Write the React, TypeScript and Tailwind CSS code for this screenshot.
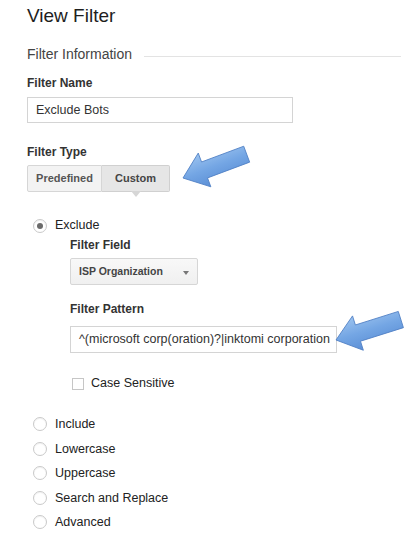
import React from 'react';

const radios = ['Include', 'Lowercase', 'Uppercase', 'Search and Replace', 'Advanced'];

function Radio({ checked = false }: { checked?: boolean }) {
  return (
    <span className="flex h-[14px] w-[14px] items-center justify-center rounded-full border border-[#c9c9c9] bg-white shadow-[inset_0_1px_1px_rgba(0,0,0,0.06)]">
      {checked && <span className="h-[6px] w-[6px] rounded-full bg-[#6b6b6b]" />}
    </span>
  );
}

function Arrow({ x, y, angle }: { x: number; y: number; angle: number }) {
  return (
    <g transform={`translate(${x},${y}) rotate(${angle})`}>
      <polygon
        points="0,0 23,-18 23,-8.5 68,-8.5 68,8.5 23,8.5 23,18"
        fill="url(#arrowFill)"
        stroke="#4f7fc4"
        strokeWidth="0.8"
        strokeLinejoin="round"
      />
    </g>
  );
}

export default function App() {
  return (
    <div className="relative h-[540px] w-[413px] overflow-hidden bg-white pl-[27px] text-[#333] [font-family:'Liberation_Sans',Arial,sans-serif]">
      {/* titulo */}
      <div className="pt-[4px] text-[19px] leading-[24px] text-[#1e1e1e]">View Filter</div>

      <div className="mt-[17px] flex items-start">
        <span className="text-[14px] leading-[18px] text-[#444]">Filter Information</span>
        <span className="ml-[12px] mt-[11px] h-px w-[257px] bg-[#e3e3e3]" />
      </div>

      <div className="mt-[12px] text-[12px] font-bold leading-[16px]">Filter Name</div>
      <div className="mt-[6px] h-[26px] w-[266px] border border-[#d4d4d4] pl-[8px] text-[12.5px] leading-[24px] text-[#333]">
        Exclude Bots
      </div>

      <div className="mt-[21px] text-[12px] font-bold leading-[16px]">Filter Type</div>
      <div className="mt-[5px] flex h-[27px] w-[143px] text-[11px] font-bold leading-[25px] text-[#555]">
        <div className="w-[75px] rounded-l-[2px] border border-[#d6d6d6] bg-[#f3f3f3] text-center">Predefined</div>
        <div className="relative flex-1 rounded-r-[2px] border border-l-0 border-[#d0d0d0] bg-[#e6e6e6] text-center text-[#444]">
          Custom
          <span className="absolute left-1/2 top-full -ml-[5px] h-0 w-0 border-x-[5px] border-t-[6px] border-x-transparent border-t-[#d6d6d6]" />
        </div>
      </div>

      <div className="mt-[25px] flex h-[16px] items-center pl-[6px] text-[12.5px] leading-[16px] text-[#222]">
        <span className="translate-y-[1px]">
          <Radio checked />
        </span>
        <span className="ml-[8px]">Exclude</span>
      </div>

      <div className="pl-[43px]">
        <div className="mt-[4px] text-[12px] font-bold leading-[16px]">Filter Field</div>
        <div className="mt-[5px] flex h-[27px] w-[128px] items-center rounded-[2px] border border-[#d6d6d6] bg-gradient-to-b from-[#f8f8f8] to-[#f0f0f0] pl-[8px] text-[10.5px] font-bold text-[#444]">
          <span>ISP Organization</span>
          <span className="ml-auto mr-[8px] h-0 w-0 translate-y-[1px] border-x-[3.5px] border-t-[4px] border-x-transparent border-t-[#777]" />
        </div>

        <div className="mt-[16px] text-[12px] font-bold leading-[16px]">Filter Pattern</div>
        <div className="mt-[9px] h-[27px] w-[267px] border border-[#d4d4d4] pl-[8px] text-[12.5px] leading-[25px] text-[#333]">
          ^(microsoft corp(oration)?|inktomi corporation
        </div>

        <div className="mt-[22px] flex h-[16px] items-center pl-[2px] text-[12.5px] leading-[16px] text-[#222]">
          <span className="h-[12px] w-[12px] translate-y-[1px] border border-[#c6c6c6] bg-white" />
          <span className="ml-[7px]">Case Sensitive</span>
        </div>
      </div>

      <div className="mt-[25px] flex flex-col gap-[8.5px] pl-[6px] text-[12.5px] leading-[16px] text-[#222]">
        {radios.map((r) => (
          <div key={r} className="flex h-[16px] items-center">
            <Radio />
            <span className="ml-[8px]">{r}</span>
          </div>
        ))}
      </div>

      {/* flechas azules */}
      <svg className="pointer-events-none absolute left-0 top-0" width="413" height="540">
        <defs>
          <linearGradient id="arrowFill" x1="0" y1="0" x2="0" y2="1">
            <stop offset="0" stopColor="#9cc3ef" />
            <stop offset="0.5" stopColor="#74a6e4" />
            <stop offset="1" stopColor="#5b8fd6" />
          </linearGradient>
        </defs>
        <Arrow x={183} y={178} angle={-20.5} />
        <Arrow x={336} y={340} angle={-17.5} />
      </svg>
    </div>
  );
}
